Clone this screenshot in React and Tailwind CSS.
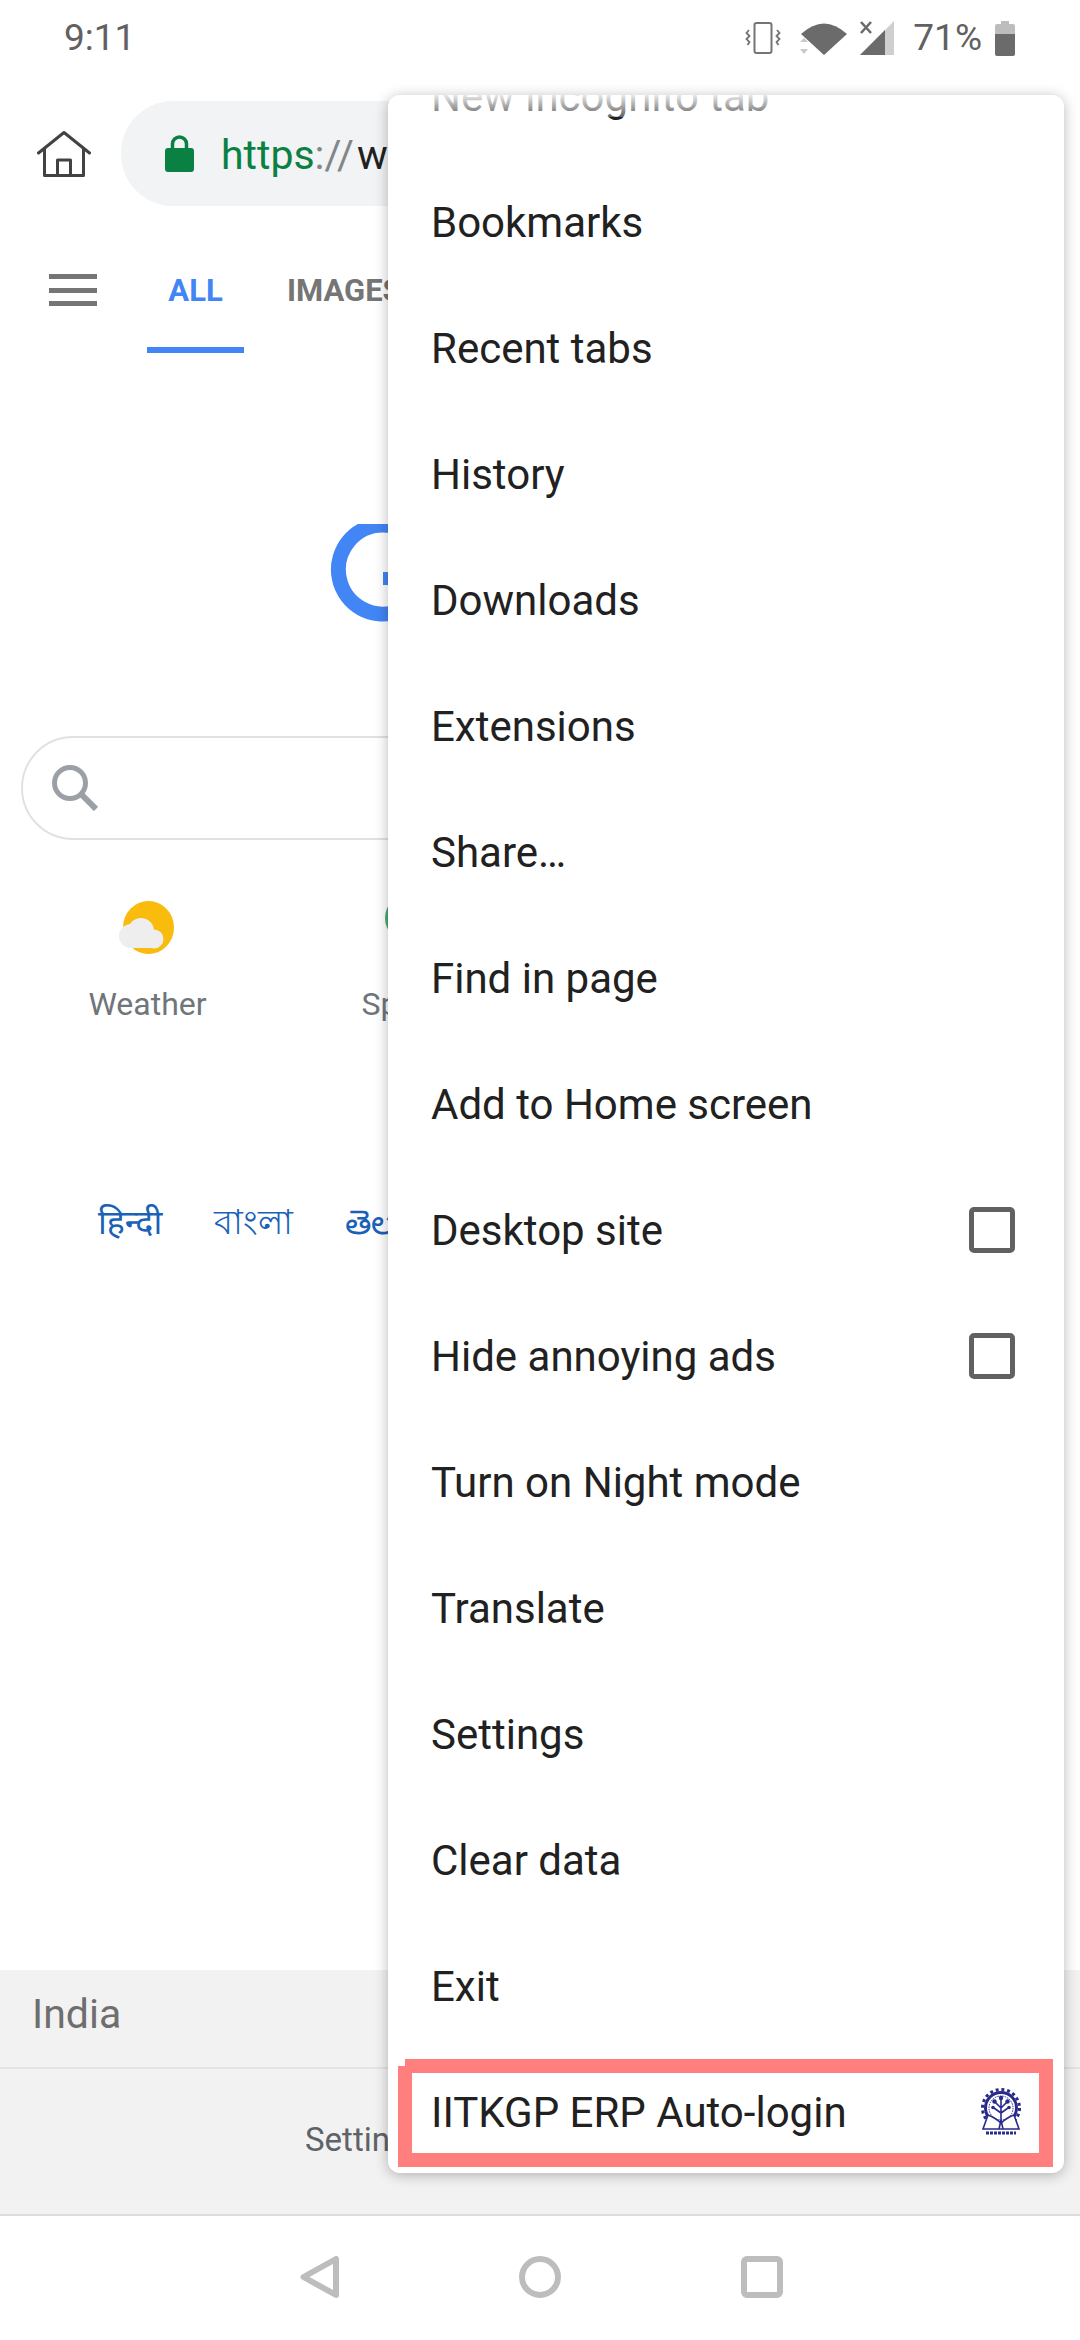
const menuItems = [
  { label: 'New incognito tab' },
  { label: 'Bookmarks' },
  { label: 'Recent tabs' },
  { label: 'History' },
  { label: 'Downloads' },
  { label: 'Extensions' },
  { label: 'Share…' },
  { label: 'Find in page' },
  { label: 'Add to Home screen' },
  { label: 'Desktop site', checkbox: true },
  { label: 'Hide annoying ads', checkbox: true },
  { label: 'Turn on Night mode' },
  { label: 'Translate' },
  { label: 'Settings' },
  { label: 'Clear data' },
  { label: 'Exit' },
  { label: 'IITKGP ERP Auto-login', logo: true },
];

function VibrateIcon() {
  return (
    <svg width="36" height="32" viewBox="0 0 36 32" fill="none" stroke="#757575" strokeWidth="2">
      <rect x="9.5" y="1" width="17" height="30" rx="2" />
      <path d="M4 8l-2.5 3 3 3-3 3 3 3-2 3" strokeWidth="1.8" />
      <path d="M32 8l2.5 3-3 3 3 3-3 3 2 3" strokeWidth="1.8" />
    </svg>
  );
}

function WifiIcon() {
  return (
    <svg width="48" height="34" viewBox="0 0 48 34">
      <path d="M1 13Q24-8 47 13L24 34Z" fill="#6b6b6b" />
      <path d="M5 20l4-4 4 4zM5 27l4 5 4-5z" fill="#c9c9c9" transform="translate(-5 1)" />
    </svg>
  );
}

function SignalIcon() {
  return (
    <svg width="34" height="34" viewBox="0 0 34 34">
      <path d="M0 34L34 0V34Z" fill="#cfcfcf" />
      <path d="M0 34L25 9V34Z" fill="#6b6b6b" />
      <path d="M1 1l10 11M11 1L1 12" stroke="#6b6b6b" strokeWidth="2.6" fill="none" />
    </svg>
  );
}

function BatteryIcon() {
  return (
    <svg width="20" height="35" viewBox="0 0 20 35">
      <path d="M6 0h8v3h4a2 2 0 0 1 2 2v8H0V5a2 2 0 0 1 2-2h4z" fill="#bdbdbd" />
      <path d="M0 13h20v20a2 2 0 0 1-2 2H2a2 2 0 0 1-2-2z" fill="#6b6b6b" />
    </svg>
  );
}

function HomeIcon() {
  return (
    <svg width="54" height="46" viewBox="0 0 54 46" fill="none" stroke="#424242" strokeWidth="3" strokeLinejoin="round">
      <path d="M1.5 22L27 1.5 52.5 22" strokeLinecap="round" />
      <path d="M7.5 17V44.5H46.5V17" />
      <path d="M20.5 44.5V29H33.5V44.5" />
    </svg>
  );
}

function LockIcon() {
  return (
    <svg width="29" height="37" viewBox="0 0 29 37" fill="#0b8043">
      <path d="M7.5 14V9a7 7 0 0 1 14 0v5" fill="none" stroke="#0b8043" strokeWidth="3.5" />
      <rect x="0" y="13" width="29" height="24" rx="3" />
    </svg>
  );
}

function GoogleG() {
  return (
    <svg width="104" height="104" viewBox="0 0 104 104" fill="none">
      <path d="M88 17A44.500 44.500 0 1 0 96 60" stroke="#4285f4" strokeWidth="15" />
      <rect x="54" y="48" width="47" height="13" fill="#4285f4" />
    </svg>
  );
}

function SearchIcon() {
  return (
    <svg width="46" height="46" viewBox="0 0 46 46" fill="none" stroke="#9aa0a6">
      <circle cx="18" cy="18" r="15.500" strokeWidth="5" />
      <path d="M29 29L44 44" strokeWidth="6" />
    </svg>
  );
}

function WeatherIcon() {
  return (
    <svg width="55" height="53" viewBox="0 0 55 53">
      <ellipse cx="29.500" cy="26.500" rx="25.500" ry="26.500" fill="#f9bc0c" />
      <g fill="#eeeeee">
        <circle cx="12" cy="35" r="12" />
        <circle cx="22" cy="30" r="13" />
        <circle cx="35" cy="38" r="9.500" />
        <rect x="12" y="35" width="24" height="12" />
      </g>
    </svg>
  );
}

function IitLogo() {
  return (
    <svg width="42" height="48" viewBox="0 0 42 48" fill="none" stroke="#2a2a8c">
      <circle cx="21" cy="20" r="18.500" strokeWidth="3" strokeDasharray="3 2.800" />
      <circle cx="21" cy="20" r="15.500" strokeWidth="3" />
      <circle cx="21" cy="20" r="12" strokeWidth="1" strokeDasharray="1.500 1" />
      <path d="M21 36V10M21 20l-6-6M21 20l6-6M21 25l-7-5M21 25l7-5" strokeWidth="1.600" />
      <g fill="#2a2a8c" stroke="none">
        <circle cx="21" cy="10" r="2.200" />
        <circle cx="14.500" cy="13.500" r="2.200" />
        <circle cx="27.500" cy="13.500" r="2.200" />
        <circle cx="13" cy="19.500" r="1.800" />
        <circle cx="29" cy="19.500" r="1.800" />
      </g>
      <path d="M21 35Q14 29 8 27L3 41H39L34 27Q28 29 21 35Z" fill="#ffffff" strokeWidth="1.600" />
      <path d="M21 32L19 41M21 32L23 41" strokeWidth="1.600" />
      <path d="M6 45H36" strokeWidth="3" strokeDasharray="3 1" />
    </svg>
  );
}

function BackIcon() {
  return (
    <svg width="39" height="42" viewBox="0 0 39 42" fill="none" stroke="#bdbdbd" strokeWidth="6" strokeLinejoin="round">
      <path d="M3.500 21L36 3V39Z" />
    </svg>
  );
}

function MenuRow({ item }) {
  return (
    <div className="flex h-[126px] shrink-0 items-center justify-between pl-[43px] pr-[49px] text-[42px] text-[#212121]">
      <span>{item.label}</span>
      {item.checkbox && <div className="h-[46px] w-[46px] rounded-[5px] border-[5px] border-[#616161]" />}
      {item.logo && (
        <div className="-mr-[7px]">
          <IitLogo />
        </div>
      )}
    </div>
  );
}

export default function App() {
  return (
    <div className="relative flex h-[2340px] w-[1080px] flex-col overflow-hidden bg-white [font-family:Roboto,'Noto_Sans',sans-serif]">
      {/* status bar */}
      <div className="flex h-[76px] shrink-0 items-center pl-[64px] pr-[65px] text-[37px] text-[#616161]">
        <span>9:11</span>
        <div className="ml-auto flex items-center">
          <VibrateIcon />
          <div className="ml-[19px]">
            <WifiIcon />
          </div>
          <div className="ml-[12px]">
            <SignalIcon />
          </div>
          <span className="ml-[19px]">71%</span>
          <div className="ml-[13px]">
            <BatteryIcon />
          </div>
        </div>
      </div>

      {/* url bar */}
      <div className="mt-[25px] flex h-[105px] shrink-0 items-center pl-[37px]">
        <HomeIcon />
        <div className="ml-[30px] flex h-[105px] w-[940px] items-center rounded-[52px] bg-[#f1f3f4] pl-[44px]">
          <LockIcon />
          <span className="ml-[27px] pt-[4px] text-[41px]">
            <span className="text-[#0b8043]">https</span>
            <span className="text-[#80868b]">://</span>
            <span className="ml-[3px] text-[#202124]">www.google.com</span>
          </span>
        </div>
      </div>

      {/* search tabs */}
      <div className="mt-[29px] flex h-[118px] shrink-0 pl-[49px]">
        <div className="mt-[39px] flex h-[32px] w-[48px] flex-col justify-between">
          <div className="h-[5px] bg-[#757575]" />
          <div className="h-[5px] bg-[#757575]" />
          <div className="h-[5px] bg-[#757575]" />
        </div>
        <div className="ml-[50px] h-full w-[97px] border-b-[6px] border-[#4285f4] pt-[37px] text-center text-[31px] leading-[38px] font-bold text-[#4285f4]">
          ALL
        </div>
        <div className="ml-[43px] pt-[37px] text-[31px] leading-[38px] font-bold text-[#757575]">IMAGES</div>
      </div>

      {/* google logo */}
      <div className="ml-[329px] mt-[171px] shrink-0">
        <GoogleG />
      </div>

      {/* search box */}
      <div className="ml-[21px] mt-[108px] flex h-[104px] w-[1038px] shrink-0 items-center rounded-[52px] border-2 border-[#dfe1e5] pl-[29px]">
        <SearchIcon />
      </div>

      {/* shortcuts */}
      <div className="mt-[61px] flex shrink-0 pl-[17px] text-[32px] leading-[38px] text-[#70757a]">
        <div className="flex w-[261px] flex-col items-center">
          <div className="-ml-[3px]">
            <WeatherIcon />
          </div>
          <span className="mt-[31px]">Weather</span>
        </div>
        <div className="flex w-[261px] flex-col items-center">
          <div className="h-[53px]">
            <div className="-mt-[7px] h-[48px] w-[48px] rounded-full bg-[#4fa873]" />
          </div>
          <span className="mt-[31px]">Sports</span>
        </div>
      </div>

      {/* languages */}
      <div className="mt-[174px] flex shrink-0 gap-[52px] pl-[98px] text-[34px] leading-[50px] text-[#1a62b8]">
        <span>हिन्दी</span>
        <span>বাংলা</span>
        <span>తెలుగు</span>
      </div>

      {/* footer */}
      <div className="mt-auto h-[246px] shrink-0 border-b-2 border-[#dcdcdc] bg-[#f2f2f2]">
        <div className="flex h-[99px] items-center border-b-2 border-[#e4e4e4] pb-2 pl-[32px] text-[41px] text-[#6e6e6e]">
          India
        </div>
        <div className="flex h-[145px] items-center pb-1 pl-[305px] text-[33px] text-[#5f6368]">Settings</div>
      </div>

      {/* nav bar */}
      <div className="flex h-[124px] shrink-0 items-start pl-[300px] pt-[40px]">
        <BackIcon />
        <div className="ml-[180px] h-[42px] w-[42px] rounded-full border-[6px] border-[#bdbdbd]" />
        <div className="ml-[180px] h-[42px] w-[42px] rounded-[6px] border-[6px] border-[#bdbdbd]" />
      </div>

      {/* overflow menu */}
      <div className="absolute left-[388px] top-[95px] h-[2078px] w-[676px] overflow-hidden rounded-[12px] bg-white shadow-[0_2px_14px_rgba(0,0,0,0.28)]">
        <div className="-mt-[62px] flex flex-col">
          {menuItems.map((item) => (
            <MenuRow key={item.label} item={item} />
          ))}
        </div>
        <div className="absolute left-0 right-0 top-0 h-[22px] bg-linear-to-b from-white/90 to-white/30" />
        <div className="absolute left-[17px] top-[1964px] h-[7px] w-[648px] bg-[#ff7f7f]" />
        <div className="absolute left-[10px] top-[1971px] h-[101px] w-[655px] border-x-[14px] border-b-[14px] border-t-[7px] border-[#ff7f7f]" />
      </div>
    </div>
  );
}
